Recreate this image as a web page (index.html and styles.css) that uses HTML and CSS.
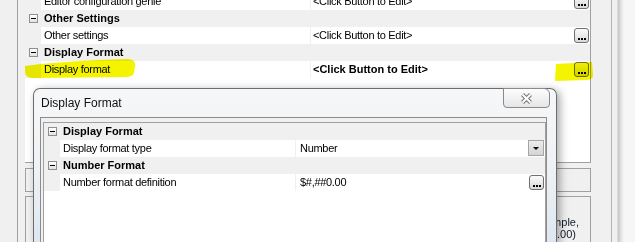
FILE: index.html
```html
<!DOCTYPE html>
<html lang="en">

<head>
    <meta charset="UTF-8">
    <title>Display Format</title>
    <link rel="stylesheet" href="styles.css">
</head>

<body>
    <div class="screen">
        <div class="gutter"></div>
        <div class="panel">
            <div class="grid main-grid">
                <div class="row prop">
                    <span class="margin"></span>
                    <span class="name">Editor configuration genie</span>
                    <span class="value"><span class="text">&lt;Click Button to Edit&gt;</span><span class="more"><i></i><i></i><i></i></span></span>
                </div>
                <div class="row cat">
                    <span class="margin"><i class="minus"></i></span>
                    <span class="cat-label">Other Settings</span>
                </div>
                <div class="row prop">
                    <span class="margin"></span>
                    <span class="name">Other settings</span>
                    <span class="value"><span class="text">&lt;Click Button to Edit&gt;</span><span class="more"><i></i><i></i><i></i></span></span>
                </div>
                <div class="row cat">
                    <span class="margin"><i class="minus"></i></span>
                    <span class="cat-label">Display Format</span>
                </div>
                <div class="row prop">
                    <span class="margin"></span>
                    <span class="name">Display format</span>
                    <span class="value strong"><span class="text">&lt;Click Button to Edit&gt;</span><span class="more"><i></i><i></i><i></i></span></span>
                </div>
                <div class="grid-fill"></div>
            </div>
            <div class="box box-top"></div>
            <div class="box box-desc">
                <span class="desc-line">Defines how the value is shown in the editor (for example,</span>
                <span class="desc-line last">a currency value written as $#,##0.00)</span>
            </div>
        </div>
        <div class="edge"></div>
    </div>

    <svg class="marker" width="635" height="242" viewBox="0 0 635 242">
        <path d="M25 66 C45 63 90 60 127 59 Q136 59 135 66 L134 73 Q133 77 125 77 L34 78 Q25 78 25 72 Z" fill="#f4f400" />
        <path d="M556 64 L592 62 L593 76 Q592 80 587 80 L555 81 Z" fill="#f4f400" />
    </svg>

    <div class="dialog">
        <div class="dialog-title">Display Format</div>
        <div class="close">
            <svg width="13" height="11" viewBox="0 0 13 11">
                <path d="M2.5 1.5 L10.5 9.5 M10.5 1.5 L2.5 9.5" stroke="#747474" stroke-width="4" />
                <path d="M2.5 1.5 L10.5 9.5 M10.5 1.5 L2.5 9.5" stroke="#fff" stroke-width="2" />
            </svg>
        </div>
        <div class="client">
            <div class="grid dlg-grid">
                <div class="row cat">
                    <span class="margin"><i class="minus"></i></span>
                    <span class="cat-label">Display Format</span>
                </div>
                <div class="row prop">
                    <span class="margin"></span>
                    <span class="name">Display format type</span>
                    <span class="value"><span class="text">Number</span><span class="drop"></span></span>
                </div>
                <div class="row cat">
                    <span class="margin"><i class="minus"></i></span>
                    <span class="cat-label">Number Format</span>
                </div>
                <div class="row prop">
                    <span class="margin"></span>
                    <span class="name">Number format definition</span>
                    <span class="value"><span class="text">$#,##0.00</span><span class="more"><i></i><i></i><i></i></span></span>
                </div>
            </div>
        </div>
    </div>
</body>

</html>
```

FILE: styles.css
```css
* {
    box-sizing: border-box;
}

body {
    margin: 0;
    width: 635px;
    height: 242px;
    overflow: hidden;
    position: relative;
    background: #f0f0f0;
    font-family: "Liberation Sans", Arial, sans-serif;
    font-size: 11px;
    color: #000;
}

.screen {
    display: flex;
    height: 242px;
}

.gutter {
    width: 17px;
    flex: none;
}

.panel {
    width: 595px;
    flex: none;
    border-left: 1px solid #a0a0a0;
    border-right: 1px solid #b4b4b4;
    padding: 0 20px 0 7px;
}

.edge {
    flex: 1;
    background: linear-gradient(to right, #f0f0f0 0, #f0f0f0 5px, #c4c4c4 6px, #e2e2e2 9px, #f6f6f6 12px);
}

/* property grid */
.grid {
    background: #fff;
}

.main-grid {
    margin-top: -7px;
    border-right: 1px solid #a0a0a0;
    border-bottom: 1px solid #a0a0a0;
}

.row {
    display: flex;
    height: 17px;
    line-height: 17px;
    white-space: nowrap;
}

.row.cat {
    background: #f0f0f0;
    font-weight: bold;
}

.margin {
    width: 16px;
    flex: none;
    background: #f0f0f0;
    display: flex;
    align-items: center;
    justify-content: center;
}

.minus {
    width: 9px;
    height: 9px;
    border: 1px solid #8e8f8f;
    background: linear-gradient(#fff, #e2e2e2);
    position: relative;
}

.minus::after {
    content: "";
    position: absolute;
    left: 1px;
    top: 3px;
    width: 5px;
    height: 1px;
    background: #000;
}

.cat-label {
    padding-left: 3px;
}

.name {
    flex: none;
    padding-left: 3px;
    background: #fff;
    letter-spacing: -0.3px;
    overflow: hidden;
}

.main-grid .name {
    width: 269px;
}

.dlg-grid .name {
    width: 235px;
}

.value {
    flex: 1;
    display: flex;
    align-items: flex-start;
    padding-left: 2px;
    border-left: 1px solid #f0f0f0;
}

.dlg-grid .value {
    padding-left: 4px;
}

.value .text {
    flex: 1;
    letter-spacing: -0.3px;
}

.value.strong .text {
    font-weight: bold;
    letter-spacing: 0;
}

.more {
    width: 15px;
    height: 15px;
    flex: none;
    margin: 1px 1px 0 auto;
    padding-bottom: 2px;
    border: 1px solid #6f6f6f;
    border-radius: 3px;
    background: linear-gradient(#fbfbfb, #dadada);
    display: flex;
    justify-content: center;
    align-items: flex-end;
    gap: 1px;
}

.more i {
    width: 2px;
    height: 2px;
    background: #000;
}

.drop {
    width: 16px;
    height: 16px;
    flex: none;
    margin: 0 1px 0 auto;
    border: 1px solid #a5a5a5;
    background: linear-gradient(#ececec, #d4d4d4);
    display: flex;
    align-items: center;
    justify-content: center;
}

.drop::after {
    content: "";
    margin-top: 1px;
    border-left: 3px solid transparent;
    border-right: 3px solid transparent;
    border-top: 3px solid #000;
}

.grid-fill {
    height: 84px;
}

/* panels under the grid */
.box {
    border: 1px solid #a0a0a0;
    background: #f0f0f0;
}

.box-top {
    height: 24px;
    margin-top: 5px;
}

.box-desc {
    height: 47px;
    margin-top: 4px;
    padding: 19px 11px 0 0;
    border-bottom: 0;
    text-align: right;
    line-height: 12px;
    overflow: hidden;
    white-space: nowrap;
}

.desc-line {
    display: block;
    color: #111827;
}

.desc-line.last {
    padding-right: 3px;
}

/* yellow marker strokes */
.marker {
    position: absolute;
    left: 0;
    top: 0;
    mix-blend-mode: multiply;
    pointer-events: none;
}

/* dialog window, runs on below the visible frame */
.dialog {
    position: absolute;
    left: 33px;
    top: 88px;
    width: 524px;
    height: 154px;
    padding: 0 9px 0 6px;
    border: 1px solid #6c6c6c;
    border-bottom: 0;
    border-radius: 7px 7px 0 0;
    background: linear-gradient(#f6f7f8, #eef1f4 55%, #dde7f1);
    box-shadow: 3px 2px 9px rgba(0, 0, 0, 0.35);
}

.dialog-title {
    height: 28px;
    line-height: 28px;
    padding-left: 1px;
    font-size: 12px;
    color: #111;
}

.close {
    position: absolute;
    top: -1px;
    right: 6px;
    width: 47px;
    height: 20px;
    border: 1px solid #8a8a8a;
    border-radius: 0 6px 4px 4px;
    background: linear-gradient(#fdfdfd, #e6e6e6);
    display: flex;
    align-items: center;
    justify-content: center;
}

.client {
    height: 125px;
    padding: 4px 0 0 2px;
    border: 1px solid #8c8c8c;
    border-bottom: 0;
    background: #f0f0f0;
}

.dlg-grid {
    height: 120px;
    border: 1px solid #a0a0a0;
    border-bottom: 0;
}
```
